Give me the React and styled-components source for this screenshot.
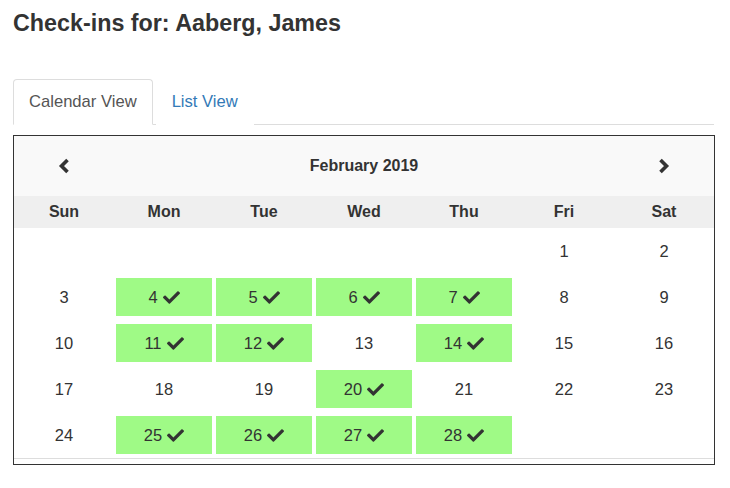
import React from 'react'
import styled, { createGlobalStyle } from 'styled-components'
import { FaCheck } from 'react-icons/fa'

const textColor = '#333'
const tabBorder = '#ddd'
const checkedGreen = '#9ffa86'

const GlobalStyle = createGlobalStyle`
    body {
        margin: 0;
        background: #fff;
        font-family: "Liberation Sans", Arial, sans-serif;
        color: ${textColor};
    }
`

const Page = styled.div`
    padding: 9px 16px 0 13px;
`

const Title = styled.h3`
    margin: 0;
    font-size: 23.3px;
    font-weight: bold;
    line-height: 28px;
`

const Tabs = styled.ul`
    display: flex;
    list-style: none;
    margin: 42px 0 0;
    padding: 0;
    border-bottom: 1px solid ${tabBorder};
`

const Tab = styled.li`
    margin-bottom: -1px;
    padding: 11px 15px 11px 15px;
    font-size: 16.6px;
    line-height: 22px;
    border: 1px solid ${({ $active }) => ($active ? tabBorder : 'transparent')};
    border-bottom-color: ${({ $active }) => ($active ? '#fff' : 'transparent')};
    border-radius: 4px 4px 0 0;
    background: #fff;
    color: ${({ $active }) => ($active ? '#555' : '#337ab7')};
    margin-right: 3px;
`

const Calendar = styled.div`
    margin-top: 10px;
    border: 1px solid #333;
    width: 700px;
`

const NavBar = styled.div`
    display: flex;
    align-items: center;
    justify-content: space-between;
    height: 60px;
    background: #f9f9f9;
    font-size: 16px;
    font-weight: bold;
`

const NavButton = styled.div`
    width: 100px;
    display: flex;
    justify-content: center;
    color: ${textColor};
`

const Grid = styled.div`
    display: grid;
    grid-template-columns: repeat(7, 100px);
`

const DayName = styled.div`
    height: 32px;
    display: flex;
    align-items: center;
    justify-content: center;
    background: #efefef;
    font-size: 16px;
    font-weight: bold;
`

const DayCell = styled.div`
    height: 38px;
    margin: 4px 2px;
    display: flex;
    align-items: center;
    justify-content: center;
    gap: 5px;
    font-size: 16.5px;
    background: ${({ $checked }) => ($checked ? checkedGreen : 'transparent')};
`

const Footer = styled.div`
    height: 5px;
    border-top: 1px solid ${tabBorder};
`

const Chevron = ({ flip }) => (
    <svg width="12" height="16" viewBox="0 0 12 16"
        style={flip ? { transform: 'scaleX(-1)' } : undefined}>
        <polyline points="9.5,2 3.5,8 9.5,14" fill="none"
            stroke="currentColor" strokeWidth="3.6" />
    </svg>
)

const dayNames = ['Sun', 'Mon', 'Tue', 'Wed', 'Thu', 'Fri', 'Sat']
const checked = [4, 5, 6, 7, 11, 12, 14, 20, 25, 26, 27, 28]

// Feb 2019 starts on a Friday
const cells = [
    ...Array(5).fill(null),
    ...Array.from({ length: 28 }, (_, i) => i + 1),
]

export default function App() {
    return (
        <Page>
            <GlobalStyle />
            <Title>Check-ins for: Aaberg, James</Title>
            <Tabs>
                <Tab $active>Calendar View</Tab>
                <Tab>List View</Tab>
            </Tabs>
            <Calendar>
                <NavBar>
                    <NavButton><Chevron /></NavButton>
                    <span>February 2019</span>
                    <NavButton><Chevron flip /></NavButton>
                </NavBar>
                <Grid>
                    {dayNames.map((d) => (
                        <DayName key={d}>{d}</DayName>
                    ))}
                    {cells.map((day, i) => {
                        const isChecked = checked.includes(day)
                        return (
                            <DayCell key={i} $checked={isChecked}>
                                {day}
                                {isChecked && <FaCheck size={17} />}
                            </DayCell>
                        )
                    })}
                </Grid>
                <Footer />
            </Calendar>
        </Page>
    )
}
